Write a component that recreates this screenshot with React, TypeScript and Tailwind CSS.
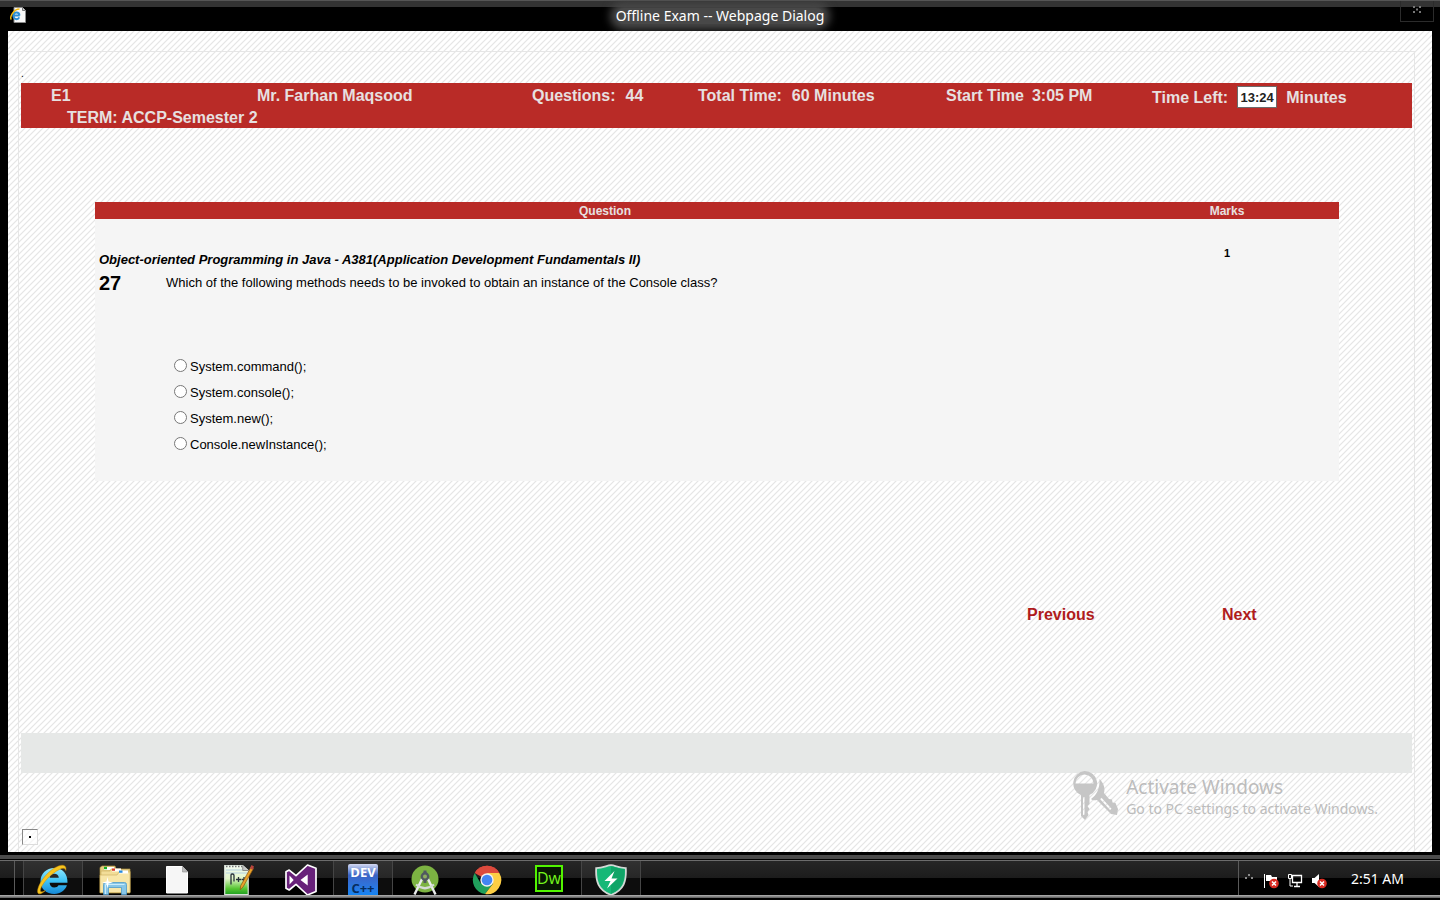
import React, { useState } from "react";

const stripes =
  "bg-white bg-[linear-gradient(135deg,#e6e6e6_0_7%,#fff_9%_41%,#e6e6e6_43%_57%,#fff_59%_91%,#e6e6e6_93%)] bg-[length:6px_6px]";

const options = ["System.command();", "System.console();", "System.new();", "Console.newInstance();"];

function PageIcon() {
  return (
    <svg width="16" height="16" viewBox="0 0 16 16" aria-hidden="true">
      <path d="M4 .5h8.5l3 3v12H4z" fill="#f8f8f8" stroke="#8a8a8a" />
      <path d="M12.5.5v3h3" fill="#ccc" stroke="#777" />
      <path d="M9.7 8.6H3.4a2.9 2.9 0 1 1 6 0M9.2 10.4A3 3 0 0 1 3.5 9.5" fill="none" stroke="#2a8fd6" strokeWidth="2" />
      <path d="M1.4 12.5C-1 11 3.500 2 9.500 2" fill="none" stroke="#f2b90f" strokeWidth="1.500" />
    </svg>
  );
}

function ExplorerBrowserIcon() {
  return (
    <svg width="32" height="32" viewBox="0 0 32 32" aria-hidden="true">
      <defs>
        <linearGradient id="ie-blue" x1="0" y1="0" x2="0" y2="1">
          <stop offset="0" stopColor="#8fe9ff" />
          <stop offset="0.5" stopColor="#3fc3f5" />
          <stop offset="1" stopColor="#1587d6" />
        </linearGradient>
      </defs>
      <path
        d="M30.500 18.800H12.600c.2 3 2 4.700 4.600 4.700 2.200 0 3.500-.8 4.300-2.200h8.400C28.200 26.600 23.400 30 17.300 30 9.500 30 3.500 25 3.500 17.300 3.500 9.800 9.500 4 17.200 4c8.400 0 13.700 6 13.300 14.800zM21.800 13.800c-.2-2.500-2-4-4.500-4s-4.300 1.500-4.600 4z"
        fill="url(#ie-blue)"
      />
      <path
        d="M8.500 26.500C3 31.500-.8 31 1 24.500 3 17 12 5.500 21.500 2c5-1.800 8.300-.6 7.300 4.500-.7-2.600-3-2.700-6.300-1C14 9.500 5.500 19 3.600 25c-1 3.300 1.200 3.700 4.900 1.500z"
        fill="#f7c51e"
        stroke="#c98b06"
        strokeWidth=".5"
      />
    </svg>
  );
}

function FolderIcon() {
  return (
    <svg width="32" height="30" viewBox="0 0 32 30" aria-hidden="true">
      <path d="M1 4V2.500L3 1h13l1 3h14v24H1z" fill="#e5ce83" stroke="#b09243" strokeWidth=".7" />
      <path d="M5 2h10v3H5z" fill="#fff" />
      <path d="M5 1.800h3v2.400H5z" fill="#16ad25" />
      <path d="M2 6h9l1-2h10l1 2h8v21H2z" fill="#f2dd98" stroke="#c9ad5b" strokeWidth=".6" />
      <path d="M13 3.500h9v3h-9z" fill="#fff" />
      <path d="M13 3.500h3v2.300h-3z" fill="#dd3a2a" />
      <path d="M1 10h17l2-3h11v20.500H1z" fill="#f8e6a8" stroke="#c9ad5b" strokeWidth=".6" />
      <path d="M20 5.500h9v3h-9z" fill="#fff" />
      <path d="M20 5.500h3.500v2.300H20z" fill="#278be0" />
      <path d="M4.500 29.500v-10q0-2 2-2h19q2 0 2 2v10h-5v-7h-13v7z" fill="#87c6e8" stroke="#4f9bc9" strokeWidth=".8" />
      <path d="M6.500 29v-9.500h19" fill="none" stroke="#c9ecfb" />
      <path d="m8.500 12 1 4.500 4.500 1-4.500 1-1 5-1-5-4.500-1 4.500-1z" fill="#fff" />
    </svg>
  );
}

function BlankFileIcon() {
  return (
    <svg width="22" height="28" viewBox="0 0 22 28" aria-hidden="true">
      <path d="M.5.5h16l5 5.500v21H.5z" fill="#f6f6f6" stroke="#fff" />
      <path d="m16.500.500 5 5.500h-5z" fill="#bdbdbd" stroke="#8d8d8d" strokeWidth=".6" />
    </svg>
  );
}

function NotepadIcon() {
  return (
    <svg width="30" height="32" viewBox="0 0 30 32" aria-hidden="true">
      <defs>
        <linearGradient id="note-green" x1="0" y1="0" x2="0" y2="1">
          <stop offset="0" stopColor="#f4fbf4" />
          <stop offset="0.45" stopColor="#e2f5c9" />
          <stop offset="0.8" stopColor="#55c531" />
          <stop offset="1" stopColor="#1f9f22" />
        </linearGradient>
      </defs>
      <path d="M.7 1.500h18l5.500 5v24H.7z" fill="url(#note-green)" stroke="#d9e2d9" strokeWidth="1.200" />
      <path d="M2 2.500h16" stroke="#777" strokeWidth="1.500" strokeDasharray="1.500 1.500" />
      <path d="M2 6h16M2 9h21" stroke="#b3cfdf" />
      <path d="M18.700 1.500v5h5.500" fill="#c4c4c4" stroke="#777" strokeWidth=".8" />
      <path d="M7 20.500v-9.500q0-1 1-1h.5q1.500 0 1.500 1.500v6M14.500 13v5M12 15.500h5M20 13v5M17.500 15.500h5" fill="none" stroke="#26303a" strokeWidth="1.300" />
      <path d="m27 3 2.500 1.500L19 23l-2.800 2.700.5-4z" fill="#eaa22a" stroke="#8a5411" strokeWidth=".7" />
      <path d="m26 4 1.500-3 2.500 1.500L28.500 6z" fill="#b8453e" />
    </svg>
  );
}

function VisualStudioIcon() {
  return (
    <svg width="34" height="32" viewBox="0 0 34 32" aria-hidden="true">
      <path
        d="M23.500 1 32 4.300v23.200L23.500 31 12 20.300 5.200 26 2 24.200V7.800L5.200 6.100 12 11.700z"
        fill="#68217a"
        stroke="#fff"
        strokeWidth="1.700"
        strokeLinejoin="round"
      />
      <path fill="#fff" d="M5.500 11.500v9l4.200-4.500zM23.700 10.500 16.500 16l7.200 5.500z" />
    </svg>
  );
}

function DevIcon() {
  return (
    <span className="flex flex-col items-center rounded-t-xs bg-linear-to-b from-[#d5d9f0] via-[#3a63c4] via-35% to-[#0a86f5] px-0.5 font-['Open_Sans',sans-serif] text-[13px] font-bold leading-4">
      <span className="text-white">DEV</span>
      <span className="text-[#062c5e]">C++</span>
    </span>
  );
}

function AndroidStudioIcon() {
  return (
    <svg width="30" height="32" viewBox="0 0 30 32" aria-hidden="true">
      <circle cx="15" cy="15" r="13.500" fill="#7cb342" />
      <path d="M4.500 30.500 13 13M25.500 30.500 17 13" stroke="#e9eceb" strokeWidth="2.400" />
      <path d="M6 20.500q9 7.500 18 0" fill="none" stroke="#d5dbd8" strokeWidth="2.200" />
      <path d="M15 6.500v3M15 15v4" stroke="#505a60" strokeWidth="3" />
      <circle cx="15" cy="12.500" r="3.200" fill="#8fae60" stroke="#505a60" strokeWidth="2.400" />
    </svg>
  );
}

function ChromeIcon() {
  return (
    <svg width="30" height="30" viewBox="0 0 30 30" aria-hidden="true">
      <path d="M15 15 2.700 7.900A14.200 14.200 0 0 1 27.300 7.900z" fill="#dc4a3d" />
      <path d="M2.700 7.900A14.200 14.200 0 0 0 13 29.050L21.150 18.550 15 15 8.850 18.550z" fill="#20a05c" />
      <path d="M15 7.900h12.300A14.200 14.200 0 0 1 13 29.050l8.150-10.500z" fill="#fdce44" />
      <path d="M3 7.500A14.200 14.200 0 0 1 27.300 7.900H15z" fill="#dc4a3d" />
      <circle cx="15" cy="15" r="6.700" fill="#f2f2f2" />
      <circle cx="15" cy="15" r="5.300" fill="#4385f4" />
    </svg>
  );
}

function DreamweaverIcon() {
  return (
    <span className="mb-1 flex h-[27px] w-7 items-center justify-center border-2 border-[#52f400] bg-[#071703] font-['Open_Sans',sans-serif] text-base font-medium leading-5 text-[#73f51c]">
      Dw
    </span>
  );
}

function ShieldIcon() {
  return (
    <svg width="32" height="32" viewBox="0 0 32 32" aria-hidden="true">
      <path d="M16 1.200c4 0 7 2.500 14.800 3C31.500 17 29 26 16 31 3 26 .5 17 1.200 4.200 9 3.700 12 1.200 16 1.200z" fill="#16b877" stroke="#d3d9d6" strokeWidth="1.800" />
      <path d="M16 2.500c3.500 0 6.500 2 13.500 2.600.3 9-.5 19.500-13.500 24.600z" fill="#10a568" />
      <path d="m19.500 7-10 10h6L12 24.500 22.500 14.500h-6z" fill="#fff" />
    </svg>
  );
}

const apps = [
  { name: "Internet Explorer", icon: <ExplorerBrowserIcon />, open: true },
  { name: "File Explorer", icon: <FolderIcon />, open: false },
  { name: "Blank document", icon: <BlankFileIcon />, open: false },
  { name: "Notepad++", icon: <NotepadIcon />, open: false },
  { name: "Visual Studio", icon: <VisualStudioIcon />, open: false },
  { name: "Dev-C++", icon: <DevIcon />, open: true },
  { name: "Android Studio", icon: <AndroidStudioIcon />, open: false },
  { name: "Chrome", icon: <ChromeIcon />, open: false },
  { name: "Dreamweaver", icon: <DreamweaverIcon />, open: false },
  { name: "Security", icon: <ShieldIcon />, open: true },
];

function ErrorBadge() {
  return (
    <>
      <circle cx="11" cy="10.500" r="4.800" fill="#d92b22" />
      <path d="m9 8.500 4 4m0-4-4 4" stroke="#fff" strokeWidth="1.500" />
    </>
  );
}

function Tray() {
  return (
    <div className="flex items-center border-l border-[#5a5a5a] pt-0.5 pl-1 pr-9">
      <button aria-label="Show hidden icons" className="flex h-6 w-3 items-center justify-center">
        <svg width="8" height="6" viewBox="0 0 8 6" aria-hidden="true" className="mb-1">
          <path d="M0 3h2v2H0zM3 0h2v2H3zM6 3h2v2H6z" fill="#8a8a8a" />
        </svg>
      </button>
      <div className="ml-2 flex items-center gap-2 pt-1">
        <svg width="16" height="16" viewBox="0 0 16 16" aria-hidden="true">
          <path d="M1.500 1v14" stroke="#fff" />
          <path d="M3 2h5l1 2h5v6H8L7 8H3z" fill="#fff" />
          <ErrorBadge />
        </svg>
        <svg width="16" height="16" viewBox="0 0 16 16" aria-hidden="true" fill="none" stroke="#fff">
          <path d="M5.500 2.500h9v7h-9zM7 13.500h6M10 10v3" strokeWidth="1.300" />
          <path d="M1.500 1.500h3v4h-3zM3 6v7h3" />
        </svg>
        <svg width="16" height="16" viewBox="0 0 16 16" aria-hidden="true">
          <path d="M1 5h2.500L8 1v13l-4.500-4H1z" fill="#fff" />
          <ErrorBadge />
        </svg>
      </div>
      <time className="ml-6 font-['Noto_Sans',sans-serif] text-sm leading-5 text-white">2:51 AM</time>
    </div>
  );
}

function Taskbar() {
  return (
    <footer className="flex flex-col bg-black">
      <div className="mt-[3px] h-1 bg-[#4b4b4b]" />
      <div className="mt-px flex h-[35px] border-t border-[#6c6c6c] bg-linear-to-b from-[#262626] from-0% via-[#1c1c1c] via-50% to-black to-50%">
        <div className="w-[15px] border-r border-[#5a5a5a]" />
        <nav aria-label="Taskbar" className="ml-2 flex flex-1 gap-0.5">
          {apps.map((app) => (
            <button
              key={app.name}
              aria-label={app.name}
              className={
                app.open
                  ? "flex w-[60px] items-center justify-center border-x border-[#454545] bg-white/5 pt-1"
                  : "flex w-[60px] items-center justify-center pt-1"
              }
            >
              {app.icon}
            </button>
          ))}
        </nav>
        <Tray />
      </div>
      <div className="mb-0.5 h-[3px] bg-linear-to-b from-[#b5b5b5] to-[#5a5a5a]" />
    </footer>
  );
}

function TitleBar() {
  return (
    <header className="grid h-[31px] grid-cols-[1fr_auto_1fr] border-t border-[#555] bg-linear-to-b from-[#333] from-0% via-[#333] via-20% to-black to-20%">
      <div className="pl-2.5 pt-1.5">
        <PageIcon />
      </div>
      <h1 className="flex h-4 items-center self-center rounded-full bg-[#484848] font-['Noto_Sans',sans-serif] text-sm leading-4 text-white shadow-[0_0_9px_6px_#484848]">
        Offline Exam -- Webpage Dialog
      </h1>
      <button
        aria-label="Close"
        className="mr-1.5 flex h-[21px] w-[34px] items-center justify-center justify-self-end border border-t-0 border-[#2b2b2b]"
      >
        <svg width="8" height="7" viewBox="0 0 8 7" aria-hidden="true" className="mb-1">
          <path d="M0 0h2v2H0zM6 0h2v2H6zM3 2.500h2v2H3zM0 5h2v2H0zM6 5h2v2H6z" fill="#777" />
        </svg>
      </button>
    </header>
  );
}

function ExamHeader() {
  return (
    <section className="bg-[#b92b27] pt-0.5 pl-[30px] text-base font-bold leading-[22px] text-[#e7e0e0]">
      <div className="grid h-[22px] grid-cols-[206fr_275fr_166fr_248fr_206fr_260fr] whitespace-nowrap">
        <span>E1</span>
        <span>Mr. Farhan Maqsood</span>
        <span className="flex gap-2.5">
          <span>Questions:</span>
          <span>44</span>
        </span>
        <span className="flex gap-2.5">
          <span>Total Time:</span>
          <span>60 Minutes</span>
        </span>
        <span className="flex gap-2">
          <span>Start Time</span>
          <span>3:05 PM</span>
        </span>
        <label className="flex h-[23px] items-end gap-[9px] leading-5">
          <span>Time Left:</span>
          <input
            readOnly
            value="13:24"
            className="h-[22px] w-10 border border-[#6b6b6b] bg-white text-center text-[13px] font-bold text-[#222]"
          />
          <span>Minutes</span>
        </label>
      </div>
      <p className="pl-4 leading-[21px]">TERM: ACCP-Semester 2</p>
    </section>
  );
}

function QuestionTable() {
  const [answer, setAnswer] = useState("");
  return (
    <table className="w-full table-fixed border-collapse bg-[#f5f5f5] text-black">
      <colgroup>
        <col className="w-[82%]" />
        <col className="w-[18%]" />
      </colgroup>
      <thead>
        <tr className="h-[17px] bg-[#b92b27] text-xs leading-4 text-[#e7e0e0]">
          <th className="p-0">Question</th>
          <th className="p-0">Marks</th>
        </tr>
      </thead>
      <tbody>
        <tr>
          <td className="px-1 pt-8 pb-[23px] align-top">
            <h2 className="text-[13px] font-bold italic leading-[18px]">
              Object-oriented Programming in Java - A381(Application Development Fundamentals II)
            </h2>
            <div className="flex items-center">
              <span className="w-[67px] text-xl font-bold leading-7">27</span>
              <p className="text-[13px] leading-7">
                Which of the following methods needs to be invoked to obtain an instance of the Console class?
              </p>
            </div>
            <fieldset aria-label="Answers" className="mt-[57px] pl-[75px]">
              {options.map((option) => (
                <label key={option} className="flex h-[26px] items-center gap-[3px] text-[13px] leading-5">
                  <input
                    type="radio"
                    name="answer"
                    checked={answer === option}
                    onChange={() => setAnswer(option)}
                    className="mb-1 size-[13px]"
                  />
                  {option}
                </label>
              ))}
            </fieldset>
          </td>
          <td className="pt-7 text-center align-top text-[11px] font-bold leading-3">1</td>
        </tr>
      </tbody>
    </table>
  );
}

function Watermark() {
  return (
    <aside className="pointer-events-none absolute right-[54px] bottom-[31px] flex gap-2 font-['Noto_Sans',sans-serif] text-[#bcbcbc]">
      <svg width="46" height="50" viewBox="0 0 46 50" aria-hidden="true">
        <path
          fillRule="evenodd"
          d="M12.500 0a12.500 12.500 0 0 1 5 24v9l-2 2 2 3-2 3 1 3-3.500 5-4-4V24a12.500 12.500 0 0 1 3.500-24zM3.500 12.500h18a9 9 0 0 0-18 0zM11 26v18h1.500V26z"
          fill="#c6c6c6"
        />
        <path
          fillRule="evenodd"
          d="M27.500 8c4 4 6 9 4.500 14l5 6 3 .5.5 3 3 .5 2.500 6-1 6-6-1-14-14c-2 .5-5 .5-6-1 6-4 9-11 8.500-20zM28 28l10 11 1.500-1.200-10-11z"
          fill="#c6c6c6"
        />
      </svg>
      <div className="pt-1">
        <p className="text-[19px] leading-6">Activate Windows</p>
        <p className="text-sm leading-5">Go to PC settings to activate Windows.</p>
      </div>
    </aside>
  );
}

export default function App() {
  return (
    <div className="flex min-h-screen flex-col bg-black font-['Liberation_Sans',Arial,sans-serif]">
      <TitleBar />
      <main className={`relative mx-2 flex flex-1 flex-col px-2.5 pt-5 ${stripes}`}>
        <div className="mr-[7px] flex flex-1 flex-col border border-b-0 border-[#e6e6e6] px-0.5">
          <p className="h-[31px] pt-4 text-[10px] leading-3 text-black">.</p>
          <ExamHeader />
          <div className="mt-[74px] pr-[73px] pl-[74px]">
            <QuestionTable />
            <nav aria-label="Questions" className="mt-[122px] grid grid-cols-[932fr_195fr_117fr] text-base font-bold leading-6 text-[#b01c1c]">
              <a href="#previous" className="col-start-2">
                Previous
              </a>
              <a href="#next">Next</a>
            </nav>
          </div>
          <div className="mt-[106px] h-10 bg-[#e6e8e7]" />
          <div className="mt-auto mb-[7px] ml-px flex size-4 items-center justify-center border border-[#dcdcdc] border-t-[#888] border-l-[#888] bg-white/60">
            <span className="size-0.5 bg-black" />
          </div>
        </div>
        <Watermark />
      </main>
      <Taskbar />
    </div>
  );
}
